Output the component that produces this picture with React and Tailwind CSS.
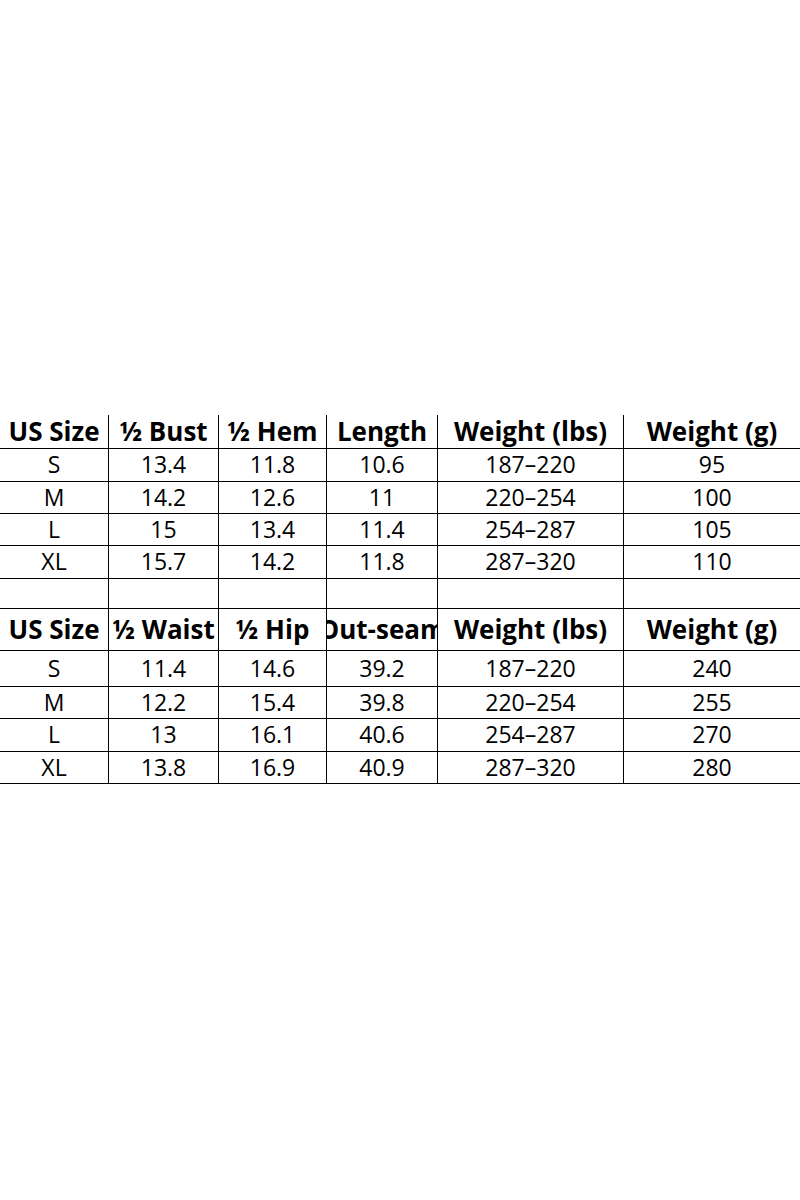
import React from 'react';

const cols = 'grid grid-cols-[109px_110px_108px_111px_186px_1fr]';

const topRows = [
  ['S', '13.4', '11.8', '10.6', '187–220', '95'],
  ['M', '14.2', '12.6', '11', '220–254', '100'],
  ['L', '15', '13.4', '11.4', '254–287', '105'],
  ['XL', '15.7', '14.2', '11.8', '287–320', '110'],
];

const bottomRows = [
  ['S', '11.4', '14.6', '39.2', '187–220', '240'],
  ['M', '12.2', '15.4', '39.8', '220–254', '255'],
  ['L', '13', '16.1', '40.6', '254–287', '270'],
  ['XL', '13.8', '16.9', '40.9', '287–320', '280'],
];

// one table row; only the narrow fourth column clips ("Out-seam" spills off both sides)
const Row = ({ cells, height, head }) => (
  <div className={cols}>
    {cells.map((c, i) => (
      <div
        key={i}
        className={`${height} flex items-center justify-center whitespace-nowrap leading-[1.2] border-b border-black ${i === 3 ? 'overflow-hidden' : ''} ${i < 5 ? 'border-r' : ''} ${head ? 'text-[26px] font-bold' : 'text-[23px]'}`}
      >
        {c}
      </div>
    ))}
  </div>
);

export default function App() {
  const heights1 = ['h-[33px]', 'h-[32px]', 'h-[32px]', 'h-[33px]'];
  const heights2 = ['h-[36px]', 'h-[32px]', 'h-[33px]', 'h-[32px]'];

  return (
    <div className="w-[800px] h-[1200px] bg-white text-black font-['Open_Sans',sans-serif] pt-[415px]">
      <Row head height="h-[34px]" cells={['US Size', '½ Bust', '½ Hem', 'Length', 'Weight (lbs)', 'Weight (g)']} />
      {topRows.map((r, i) => (
        <Row key={r[0]} height={heights1[i]} cells={r} />
      ))}
      <Row height="h-[30px]" cells={['', '', '', '', '', '']} />
      <Row head height="h-[42px]" cells={['US Size', '½ Waist', '½ Hip', 'Out-seam', 'Weight (lbs)', 'Weight (g)']} />
      {bottomRows.map((r, i) => (
        <Row key={r[0]} height={heights2[i]} cells={r} />
      ))}
    </div>
  );
}
